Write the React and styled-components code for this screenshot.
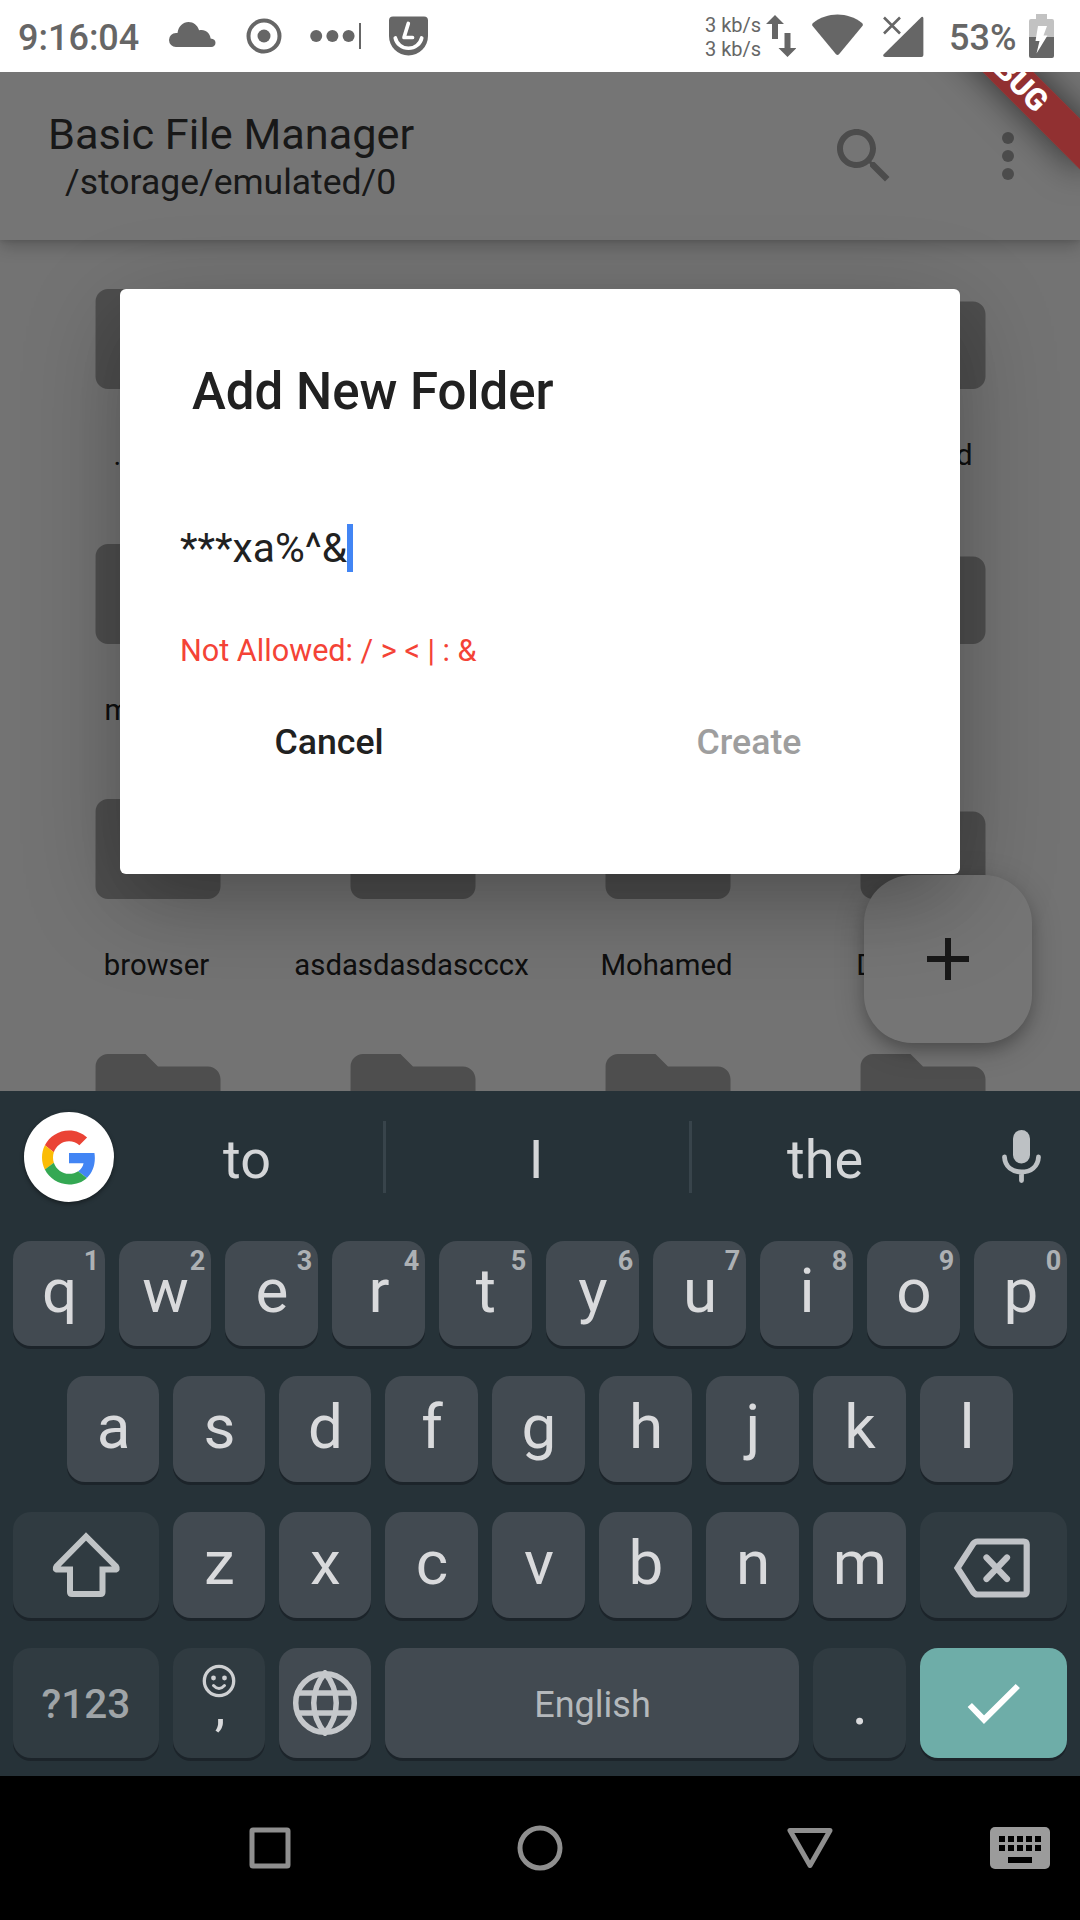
import React from "react";
import styled, { createGlobalStyle } from "styled-components";

const GlobalStyle = createGlobalStyle`
  *, *::before, *::after { box-sizing: border-box; }
  body { margin: 0; background: #000; }
  svg { display: block; flex: none; }
`;

const Phone = styled.div`
  width: 1080px;
  height: 1920px;
  display: flex;
  flex-direction: column;
  overflow: hidden;
  font-family: Roboto, "Noto Sans", sans-serif;
`;

/* ---------- status bar ---------- */

const StatusBar = styled.header`
  height: 72px;
  flex: none;
  display: flex;
  align-items: flex-start;
  background: #fff;
  color: #666;
  padding-left: 18px;
`;

const StatusText = styled.span`
  width: ${(p) => p.$width}px;
  flex: none;
  font-size: 36px;
  font-weight: 500;
  line-height: 76px;
  white-space: nowrap;
`;

const Speed = styled.div`
  margin-left: 277px;
  width: 61px;
  flex: none;
  padding-top: 13px;
  font-size: 20px;
  line-height: 24px;
  white-space: nowrap;
`;

const StatusIcon = styled.svg`
  height: 72px;
  flex: none;
  width: ${(p) => p.$width}px;
  margin-left: ${(p) => p.$gap || 0}px;
`;

/* ---------- application ---------- */

const AppArea = styled.main`
  position: relative;
  height: 1019px;
  flex: none;
  overflow: hidden;
  background: #fafafa;
`;

const AppBar = styled.div`
  position: relative;
  height: 168px;
  display: flex;
  align-items: flex-start;
  justify-content: space-between;
  padding: 39px 36px 0 48px;
  background: #fff;
  box-shadow: 0 6px 16px rgba(0, 0, 0, 0.22), 0 2px 4px rgba(0, 0, 0, 0.08);
`;

const Titles = styled.div`
  display: flex;
  flex-direction: column;
  align-items: center;
  color: #363636;
`;

const AppTitle = styled.h1`
  margin: 0;
  font-size: 43.300px;
  font-weight: 400;
  line-height: 48px;
`;

const AppPath = styled.div`
  margin: 3px 1px 0 0;
  font-size: 35.500px;
  line-height: 40px;
`;

const BarActions = styled.div`
  display: flex;
  gap: 72px;
  padding-top: 9px;
`;

const FolderGrid = styled.div`
  display: grid;
  grid-template-columns: repeat(4, 255px);
  grid-auto-rows: 255px;
  padding: 24px 30px 0;
`;

const FolderCell = styled.div`
  display: flex;
  flex-direction: column;
  align-items: center;
`;

const FolderName = styled.span`
  margin: 23px 2px 0 0;
  font-size: 29.300px;
  line-height: 36px;
  color: #212121;
`;

const Fab = styled.button`
  position: absolute;
  right: 48px;
  bottom: 48px;
  width: 168px;
  height: 168px;
  display: grid;
  place-items: center;
  border: 0;
  padding: 0;
  border-radius: 48px;
  background: #fff;
  box-shadow: 0 9px 15px -3px rgba(0, 0, 0, 0.2), 0 6px 30px rgba(0, 0, 0, 0.22);
`;

const Scrim = styled.div`
  position: absolute;
  inset: 0;
  display: flex;
  justify-content: center;
  align-items: flex-start;
  padding-top: 217px;
  background: rgba(0, 0, 0, 0.54);
`;

const Dialog = styled.section`
  width: 840px;
  height: 585px;
  padding: 73px 60px 0;
  border-radius: 6px;
  background: #fff;
  color: #212121;
  box-shadow: 0 33px 60px -21px rgba(0, 0, 0, 0.14), 0 26px 100px 0 rgba(0, 0, 0, 0.23);
`;

const DialogTitle = styled.h2`
  margin: 0 0 0 12px;
  font-size: 51px;
  font-weight: 500;
  line-height: 60px;
`;

const NameField = styled.div`
  display: flex;
  align-items: center;
  margin-top: 102px;
  height: 48px;
  font-size: 40.700px;
  line-height: 48px;
`;

const Caret = styled.span`
  width: 6px;
  height: 48px;
  background: #4285f4;
`;

const ErrorText = styled.p`
  margin: 61px 0 0;
  font-size: 30.600px;
  line-height: 36px;
  color: #f44336;
`;

const DialogActions = styled.div`
  display: grid;
  grid-template-columns: 1fr 1fr;
  margin: 51px -60px 0;
`;

const DialogButton = styled.button`
  border: 0;
  padding: 0 2px 0 0;
  background: none;
  font: 500 35.700px/44px Roboto, "Noto Sans", sans-serif;
  color: ${(p) => (p.disabled ? "#9e9e9e" : "#212121")};
`;

const DebugBanner = styled.div`
  position: absolute;
  left: 888px;
  top: -18px;
  width: 240px;
  height: 36px;
  transform: rotate(45deg);
  background: rgba(150, 37, 39, 0.86);
  box-shadow: 0 0 36px rgba(0, 0, 0, 0.6);
  color: #fff;
  font-size: 30.600px;
  font-weight: 900;
  line-height: 36px;
  text-align: center;
`;

/* ---------- keyboard ---------- */

const Keyboard = styled.section`
  height: 685px;
  flex: none;
  background: #263238;
`;

const SuggestionStrip = styled.div`
  height: 150px;
  display: flex;
  align-items: flex-start;
  padding: 21px 0 0 24px;
`;

const GoogleBadge = styled.div`
  width: 90px;
  height: 90px;
  flex: none;
  display: grid;
  place-items: center;
  border-radius: 50%;
  background: #fff;
  box-shadow: 0 2px 4px rgba(0, 0, 0, 0.4);
`;

const Suggestion = styled.span`
  width: ${(p) => p.$width}px;
  flex: none;
  padding: 9px ${(p) => p.$shift || 0}px 0 0;
  font-size: 54px;
  line-height: 78px;
  text-align: center;
  color: #d4d6d8;
`;

const Divider = styled.span`
  width: 3px;
  flex: none;
  height: 72px;
  margin-top: 9px;
  background: #38444b;
`;

const KeyRow = styled.div`
  display: flex;
  gap: 14px;
  height: ${(p) => p.$height}px;
  margin-bottom: 30px;
  padding-left: ${(p) => p.$inset || 13}px;
`;

const keyColors = { letter: "#424a51", side: "#303b41", enter: "#6eada8" };

const Key = styled.button`
  position: relative;
  flex: 0 0 ${(p) => p.$width || 93}px;
  display: flex;
  align-items: center;
  justify-content: center;
  border: 0;
  padding: ${(p) => p.$drop || 0}px 0 ${(p) => p.$lift || 0}px ${(p) => p.$shift || 0}px;
  border-radius: 18px;
  background: ${(p) => keyColors[p.$kind || "letter"]};
  box-shadow: 0 3px 0 #1c242a;
  font: ${(p) => p.$weight || 400} ${(p) => p.$size || 62}px/1 Roboto, "Noto Sans", sans-serif;
  color: ${(p) => p.$color || "#d9dadc"};
`;

const Hint = styled.span`
  position: absolute;
  top: 7px;
  right: 5px;
  width: 17px;
  font-size: 27px;
  font-weight: 700;
  line-height: 27px;
  text-align: center;
  color: #adb1b4;
`;

const CommaKey = styled(Key)`
  flex-direction: column;
  justify-content: flex-start;
  padding-top: 16px;
`;

const Comma = styled.span`
  margin: -18px 0 0 2px;
  font-size: 54px;
  line-height: 54px;
`;

/* ---------- navigation bar ---------- */

const NavBar = styled.nav`
  height: 144px;
  flex: none;
  display: flex;
  align-items: center;
  padding-left: 246px;
  background: #000;
`;

const NavIcon = styled.svg`
  width: ${(p) => p.$width}px;
  height: 48px;
  margin-left: ${(p) => p.$gap || 0}px;
`;

const folders = [
  ".cache", "", "", "Android",
  "mobiles", "", "", "",
  "browser", "asdasdasdascccx", "Mohamed", "Download",
  "", "", "", "",
];

function FolderIcon() {
  return (
    <svg width="150" height="150" viewBox="0 0 24 24" fill="#aaa">
      <path d="M10 4H4c-1.1 0-1.99.9-1.99 2L2 18c0 1.1.9 2 2 2h16c1.1 0 2-.9 2-2V8c0-1.1-.9-2-2-2h-8l-2-2z" />
    </svg>
  );
}

function Status() {
  return (
    <StatusBar>
      <StatusText $width={151}>9:16:04</StatusText>
      <StatusIcon $width={47} viewBox="0 0 47 72" fill="#666">
        <path d="M7 47a7 7 0 0 1 0-14h1.500C9.500 26 14 22 19.500 22c5 0 9 3.300 10.600 8.200 6-1.500 11 2.500 11.500 8.300 3 .4 4.900 1.800 4.900 4.200 0 2.600-1.700 4.300-4.300 4.300z" />
      </StatusIcon>
      <StatusIcon $width={36} $gap={30} viewBox="0 0 36 72">
        <circle cx="18" cy="36" r="15.500" fill="none" stroke="#666" strokeWidth="4" />
        <circle cx="18" cy="36" r="6.500" fill="#666" />
      </StatusIcon>
      <StatusIcon $width={52} $gap={28} viewBox="0 0 52 72" fill="#666">
        <circle cx="6.200" cy="36" r="6" />
        <circle cx="22.400" cy="36" r="6" />
        <circle cx="38.600" cy="36" r="6" />
        <rect x="49" y="23" width="2" height="26" />
      </StatusIcon>
      <StatusIcon $width={39} $gap={27} viewBox="0 0 39 72">
        <path d="M4 16.500h31a4 4 0 0 1 4 4V36a19.500 19.500 0 0 1-39 0V20.500a4 4 0 0 1 4-4z" fill="#666" />
        <path d="M19.300 23.500L15 37.500h8.500" fill="none" stroke="#fff" strokeWidth="3.700" strokeLinecap="round" strokeLinejoin="round" />
        <path d="M6.300 38a13.500 13 0 0 0 26.400 0" fill="none" stroke="#fff" strokeWidth="3.700" strokeLinecap="round" />
      </StatusIcon>
      <Speed>
        <div>3 kb/s</div>
        <div>3 kb/s</div>
      </Speed>
      <StatusIcon $width={30} viewBox="0 0 30 72" fill="#666">
        <path d="M9 15l9 9h-6v15H6V24H0z" />
        <path d="M21.500 57l-9-9h6V33h6v15h6z" />
      </StatusIcon>
      <StatusIcon $width={51} $gap={16} viewBox="0 0 51 72" fill="#666">
        <path d="M1 23C15 11.500 36 11.500 50 23q1.500 1.400.4 3L27 54.200q-1.500 1.600-3 0L.6 26Q-.5 24.400 1 23z" />
      </StatusIcon>
      <StatusIcon $width={41} $gap={20} viewBox="0 0 41 72">
        <path d="M38.500 17q1.900-.6 1.900 1.500V55q0 2-2 2H2q-2.600-.4-1.500-2.500z" fill="#666" />
        <path d="M1 17.500l16 16M17 17.500l-16 16" stroke="#666" strokeWidth="2.600" />
      </StatusIcon>
      <StatusIcon as="span" $width={25} />
      <StatusText $width={80}>53%</StatusText>
      <StatusIcon $width={25} viewBox="0 0 25 72">
        <path d="M7 14h11v5h5q2 0 2 2v17H0V21q0-2 2-2h5z" fill="#c2c2c2" />
        <path d="M0 37h25v19q0 2-2 2H2q-2 0-2-2z" fill="#666" />
        <path d="M9 26h9l-3.500 9.500h4L7.500 53.500L10.500 41h-4z" fill="#fff" />
      </StatusIcon>
    </StatusBar>
  );
}

function FileManager() {
  return (
    <AppArea>
      <AppBar>
        <Titles>
          <AppTitle>Basic File Manager</AppTitle>
          <AppPath>/storage/emulated/0</AppPath>
        </Titles>
        <BarActions>
          <svg width="72" height="72" viewBox="0 0 24 24" fill="#a6a6a6">
            <path d="M15.500 14h-.79l-.28-.27C15.410 12.590 16 11.110 16 9.500 16 5.910 13.090 3 9.500 3S3 5.910 3 9.500 5.910 16 9.500 16c1.610 0 3.090-.59 4.230-1.570l.27.28v.79l5 4.990L20.490 19l-4.990-5zm-6 0C7.010 14 5 11.990 5 9.500S7.010 5 9.500 5 14 7.010 14 9.500 11.990 14 9.500 14z" />
          </svg>
          <svg width="72" height="72" viewBox="0 0 24 24" fill="#a6a6a6">
            <circle cx="12" cy="6" r="2" />
            <circle cx="12" cy="12" r="2" />
            <circle cx="12" cy="18" r="2" />
          </svg>
        </BarActions>
      </AppBar>
      <FolderGrid>
        {folders.map((name, i) => (
          <FolderCell key={i}>
            <FolderIcon />
            <FolderName>{name}</FolderName>
          </FolderCell>
        ))}
      </FolderGrid>
      <Fab>
        <svg width="72" height="72" viewBox="0 0 24 24" fill="#363636">
          <path d="M19 13h-6v6h-2v-6H5v-2h6V5h2v6h6v2z" />
        </svg>
      </Fab>
      <Scrim>
        <Dialog>
          <DialogTitle>Add New Folder</DialogTitle>
          <NameField>
            <span>***xa%^&amp;</span>
            <Caret />
          </NameField>
          <ErrorText>Not Allowed: / &gt; &lt; | : &amp;</ErrorText>
          <DialogActions>
            <DialogButton>Cancel</DialogButton>
            <DialogButton disabled>Create</DialogButton>
          </DialogActions>
        </Dialog>
      </Scrim>
      <DebugBanner>DEBUG</DebugBanner>
    </AppArea>
  );
}

function GoogleG() {
  return (
    <svg width="54" height="55" viewBox="0 0 48 48">
      <path fill="#EA4335" d="M24 9.500c3.540 0 6.710 1.220 9.210 3.600l6.850-6.850C35.900 2.380 30.470 0 24 0 14.620 0 6.510 5.380 2.560 13.220l7.980 6.190C12.430 13.720 17.740 9.500 24 9.500z" />
      <path fill="#4285F4" d="M46.980 24.550c0-1.570-.15-3.090-.38-4.550H24v9.020h12.940c-.58 2.960-2.260 5.480-4.780 7.180l7.730 6c4.510-4.180 7.090-10.360 7.090-17.650z" />
      <path fill="#FBBC05" d="M10.530 28.590c-.48-1.450-.76-2.990-.76-4.590s.27-3.140.76-4.590l-7.980-6.190C.92 16.460 0 20.120 0 24c0 3.880.92 7.540 2.560 10.780l7.970-6.190z" />
      <path fill="#34A853" d="M24 48c6.480 0 11.930-2.130 15.890-5.810l-7.730-6c-2.150 1.450-4.920 2.300-8.160 2.300-6.260 0-11.570-4.220-13.470-9.910l-7.980 6.190C6.510 42.620 14.620 48 24 48z" />
    </svg>
  );
}

function SoftKeyboard() {
  return (
    <Keyboard>
      <SuggestionStrip>
        <GoogleBadge><GoogleG /></GoogleBadge>
        <Suggestion $width={269} $shift={3}>to</Suggestion>
        <Divider />
        <Suggestion $width={303} $shift={3}>I</Suggestion>
        <Divider />
        <Suggestion $width={266}>the</Suggestion>
        <svg width="122" height="90" viewBox="958 1112 122 90">
          <rect x="1013" y="1130" width="17" height="33.500" rx="8.500" fill="#bdc1c4" />
          <path d="M1004.500 1157c.5 10 8 15 17 15s16.500-5 17-15M1021.500 1173v7.500" fill="none" stroke="#bdc1c4" strokeWidth="4.800" strokeLinecap="round" />
        </svg>
      </SuggestionStrip>
      <KeyRow $height={105}>
        {"qwertyuiop".split("").map((c, i) => (
          <Key key={c} $width={i < 2 ? 92 : 93} $lift={6} $shift={1}>
            {c}
            <Hint>{(i + 1) % 10}</Hint>
          </Key>
        ))}
      </KeyRow>
      <KeyRow $height={106} $inset={67}>
        {"asdfghjkl".split("").map((c, i) => (
          <Key key={c} $width={i < 3 ? 92 : 93} $lift={4} $shift={1}>{c}</Key>
        ))}
      </KeyRow>
      <KeyRow $height={106}>
        <Key $kind="side" $width={146}>
          <svg width="72" height="72" viewBox="50 1529 72 72" fill="none" stroke="#c0c4c6" strokeWidth="6">
            <path d="M86 1536.500L56.500 1566.500Q54.500 1569.500 57.500 1569.500H70V1592Q70 1594 72 1594H100.500Q102.500 1594 102.500 1592V1569.500H115Q118 1569.500 116 1566.500Z" />
          </svg>
        </Key>
        {"zxcvbnm".split("").map((c, i) => (
          <Key key={c} $width={i < 2 ? 92 : 93} $lift={4} $shift={1}>{c}</Key>
        ))}
        <Key $kind="side" $width={147}>
          <svg width="84" height="72" viewBox="952 1529 84 72" fill="none" stroke="#c0c3c7" strokeWidth="6.200">
            <path d="M957.500 1568L973 1544Q975 1541.500 977.500 1541.500H1023.500Q1026.700 1541.500 1026.700 1544.500V1591.500Q1026.700 1594.500 1023.500 1594.500H977.500Q975 1594.500 973 1592Z" />
            <path d="M986.500 1557.500L1007 1579M1007 1557.500L986.500 1579" strokeLinecap="round" />
          </svg>
        </Key>
      </KeyRow>
      <KeyRow $height={110}>
        <Key $kind="side" $width={146} $size={40.5} $weight={500} $color="#9fa4a7" $drop={2}>?123</Key>
        <CommaKey $kind="side" $width={92}>
          <svg width="34" height="34" viewBox="0 0 34 34" fill="none" stroke="#ced0d2">
            <circle cx="17" cy="17" r="14.700" strokeWidth="3.300" />
            <path d="M11.500 21.500q5.500 6 11 0" strokeWidth="3" strokeLinecap="round" />
            <circle cx="11.500" cy="14" r="2.400" fill="#ced0d2" stroke="none" />
            <circle cx="22.500" cy="14" r="2.400" fill="#ced0d2" stroke="none" />
          </svg>
          <Comma>,</Comma>
        </CommaKey>
        <Key $width={92}>
          <svg width="66" height="66" viewBox="-33 -33 66 66" fill="none" stroke="#c5c8cb" strokeWidth="5.500">
            <circle r="29.300" />
            <path d="M-28-10H28M-28 10H28" />
            <path d="M0-30C-15-12-15 12 0 30C15 12 15-12 0-30Z" />
          </svg>
        </Key>
        <Key $width={414} $size={36} $color="#b4b8bb" $drop={4} $shift={1}>English</Key>
        <Key $kind="side" $shift={1}>.</Key>
        <Key $kind="enter" $width={147}>
          <svg width="60" height="60" viewBox="964 1673 60 60" fill="none" stroke="#fff" strokeWidth="6">
            <path d="M969.800 1705L984 1719.700L1017.800 1686" />
          </svg>
        </Key>
      </KeyRow>
    </Keyboard>
  );
}

function Navigation() {
  return (
    <NavBar>
      <NavIcon $width={48} viewBox="0 0 48 48" fill="none" stroke="#8f8f8f" strokeWidth="5">
        <rect x="6" y="6" width="36" height="36" rx="1" />
      </NavIcon>
      <NavIcon $width={48} $gap={222} viewBox="0 0 48 48" fill="none" stroke="#8f8f8f" strokeWidth="5">
        <circle cx="24" cy="24" r="20" />
      </NavIcon>
      <NavIcon $width={48} $gap={222} viewBox="0 0 48 48" fill="none" stroke="#8f8f8f" strokeWidth="5" strokeLinejoin="round">
        <path d="M4 6.500H44L24 41.500Z" />
      </NavIcon>
      <NavIcon $width={60} $gap={156} viewBox="0 0 60 48">
        <rect y="3" width="60" height="42" rx="5" fill="#9b9b9b" />
        <path d="M9 12h6v6H9zM18 12h6v6h-6zM27 12h6v6h-6zM36 12h6v6h-6zM45 12h6v6h-6zM9 21h6v6H9zM18 21h6v6h-6zM27 21h6v6h-6zM36 21h6v6h-6zM45 21h6v6h-6zM18 33h24v6H18z" fill="#000" />
      </NavIcon>
    </NavBar>
  );
}

export default function App() {
  return (
    <Phone>
      <GlobalStyle />
      <Status />
      <FileManager />
      <SoftKeyboard />
      <Navigation />
    </Phone>
  );
}
